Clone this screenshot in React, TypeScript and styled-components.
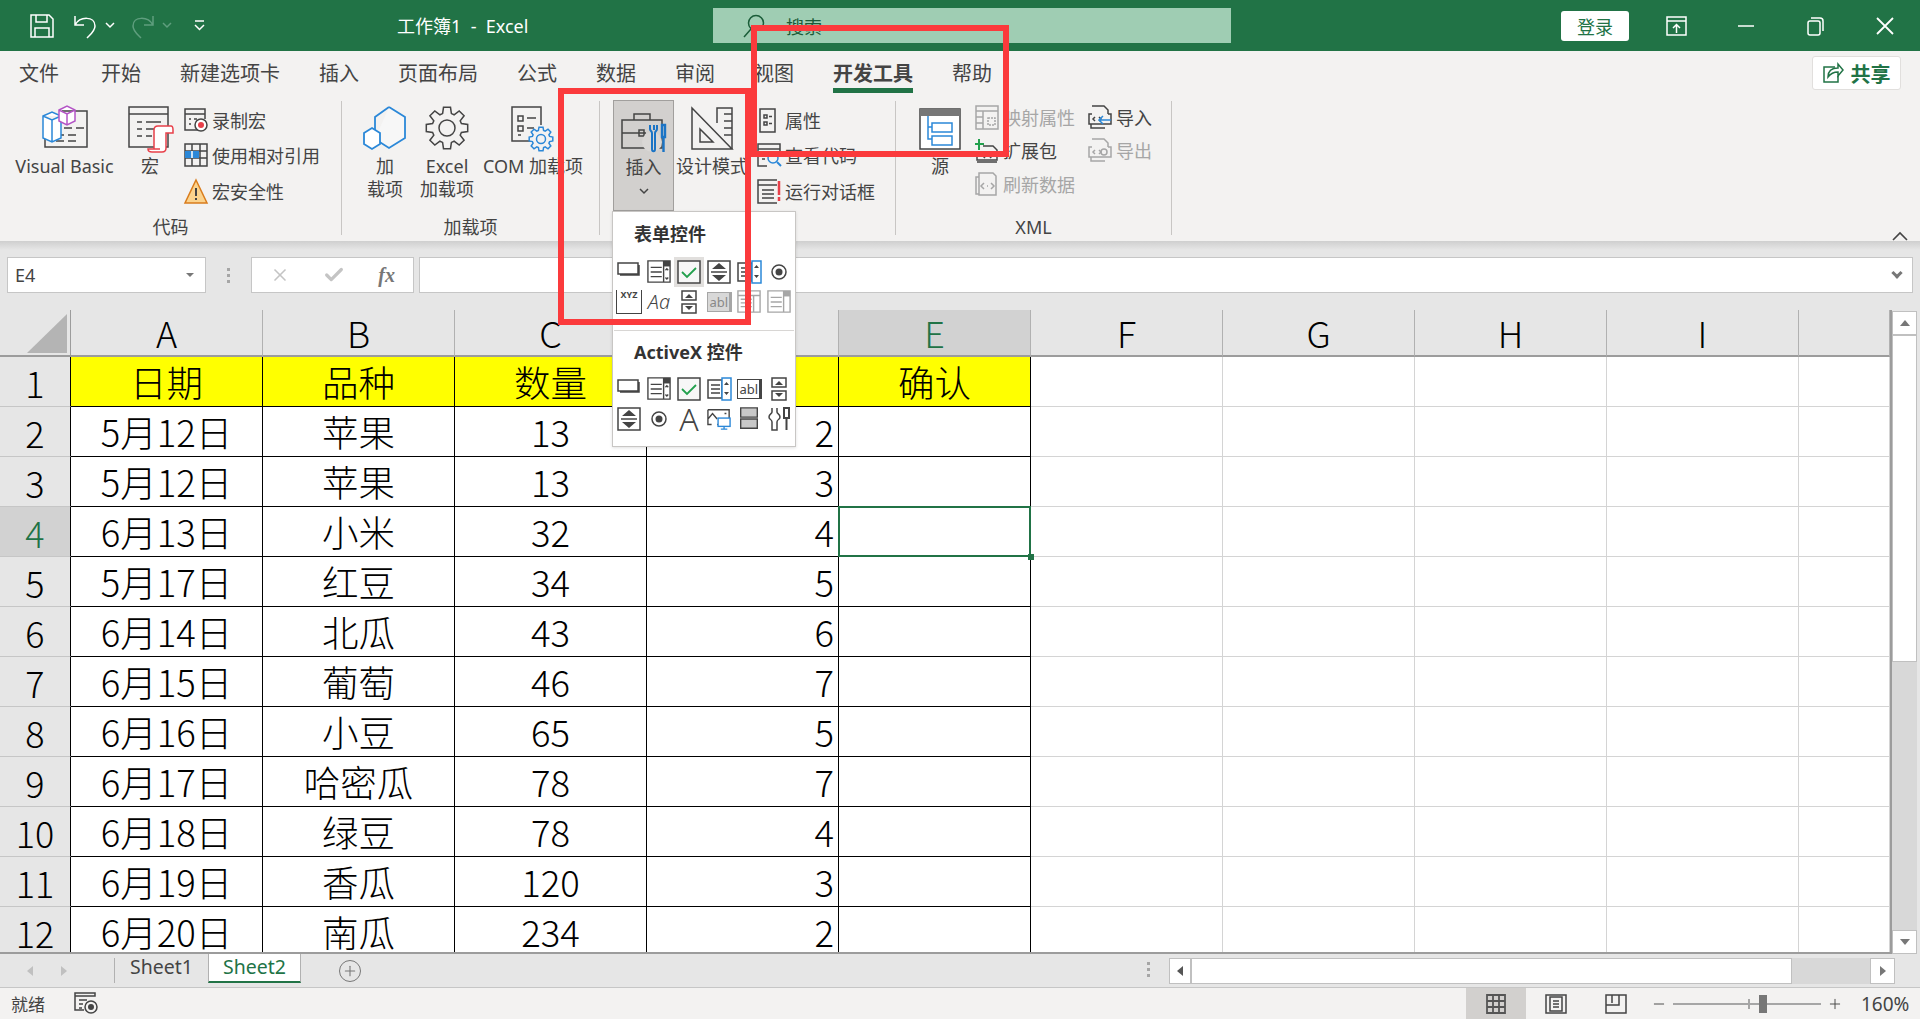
import React from 'react';
import styled, { createGlobalStyle } from 'styled-components';
import { X, Check, Plus, Minus } from 'lucide-react';

const UI_FONT = '"Noto Sans", "Noto Sans CJK SC", sans-serif';
const CELL_FONT = '"Noto Sans CJK SC", sans-serif';
const GREEN = '#217346';
const TEXT = '#444';
const MUTED = '#a6a6a6';

const GlobalStyle = createGlobalStyle`
  html, body {
    margin: 0;
    padding: 0;
    background: #fff;
    font-family: ${UI_FONT};
  }
  * { box-sizing: border-box; }
`;

const Page = styled.div`
  position: relative;
  width: 1920px;
  height: 1019px;
  overflow: hidden;
  display: flex;
  flex-direction: column;
  color: ${TEXT};
`;

/* ---------- drawings ---------- */

const Svg = styled.svg`
  display: block;
  flex: none;
  fill: none;
  stroke: ${TEXT};
  stroke-width: 1.5;
  overflow: visible;
`;

const gear = (cx: number, cy: number, ro: number, ri: number, n = 8) => {
  const pts: string[] = [];
  const step = (Math.PI * 2) / n;
  for (let i = 0; i < n; i++) {
    const a = i * step - Math.PI / 2;
    [[-0.3, ri], [-0.17, ro], [0.17, ro], [0.3, ri]].forEach(([k, r]) => {
      const t = a + k * step * 1.25;
      pts.push(`${(cx + Math.cos(t) * r).toFixed(1)} ${(cy + Math.sin(t) * r).toFixed(1)}`);
    });
  }
  return `M${pts.join('L')}Z`;
};

const BLUE = '#2b88d8';
const RED = '#e8404a';

const icons: Record<string, React.ReactNode> = {
  save: <path d="M1 1h18l4 4v18H1zM6 1v7h11V1M5 23v-9h14v9" stroke="#fff" />,
  undo: <path d="M2 3v9h9M2 12C7 3 22 3 22 13c0 5-4 8-8 12" stroke="#fff" />,
  redo: <path d="M22 3v9h-9M22 12C17 3 2 3 2 13c0 5 4 8 8 12" stroke="#5f9e7e" />,
  chevWhite: <path d="M1 1l4 4 4-4" stroke="#fff" />,
  chevDim: <path d="M1 1l4 4 4-4" stroke="#5f9e7e" />,
  chevDark: <path d="M1 1l4 4 4-4" />,
  customize: <path d="M1 1h9M1 5l4.500 4.500L10 5" stroke="#fff" />,
  search: <><circle cx="14" cy="9" r="7.500" stroke="#1a5c38" /><path d="M9 15L2 23" stroke="#1a5c38" /></>,
  present: <><rect x="1" y="1" width="19" height="18" stroke="#fff" /><path d="M1 5h19M10.500 17V9M7 12l3.500-3.500L14 12" stroke="#fff" /></>,
  minimize: <path d="M0 1h16" stroke="#fff" />,
  restore: <path d="M1 7a2 2 0 0 1 2-2h8a2 2 0 0 1 2 2v10a2 2 0 0 1-2 2H3a2 2 0 0 1-2-2zM4 2h9a3 3 0 0 1 3 3v10" stroke="#fff" />,
  close: <path d="M1 1l16 16M17 1L1 17" stroke="#fff" strokeWidth="1.8" />,
  share: <><path d="M12 4H1v15h14v-6" stroke={GREEN} /><path d="M5 14c0-6 4-9 10-9V1l5 6-5 6V9c-4 0-7 1-10 5z" stroke={GREEN} fill="#fff" /></>,
  vb: <g transform="translate(0 -2)">
    <path d="M20 7h25v36H3V30M22 24h8M34 24h8M14 31h8M26 31h8M14 37h8M26 37h8" />
    <path d="M1 12l9-4 9 4v22l-9 4-9-4zM1 12l9 4 9-4M10 16v22" stroke={BLUE} fill="#fff" />
    <path d="M17 6l8-4 8 4v11l-8 4-8-4zM17 6l8 4 8-4M25 10v11" stroke="#b455c6" fill="#fff" />
  </g>,
  macro: <g transform="translate(1 2)">
    <path d="M1 1h39v40H1zM1 8h39M9 16h5M18 16h15M9 23h5M18 23h12M9 30h5M18 30h6" />
    <path d="M26 43V24c0-3 2-4 4-4h13c2 0 2 2 2 4v3h-7v15c0 3-2 4-4 4H24c-3 0-4-1-4-3h12" stroke={RED} fill="#fff" />
  </g>,
  record: <>
    <path d="M17 22H1V1h20v10M1 6h20M5 11h2M5 16h2M10 11h3" />
    <circle cx="17" cy="17" r="6" fill="#fff" /><circle cx="17" cy="17" r="3" fill={RED} stroke="none" />
  </>,
  relative: <>
    <path d="M1 1h22v22H1zM1 8h22M1 15h22M8 1v22M16 1v22" />
    <rect x="1" y="8" width="14" height="7" fill={BLUE} stroke="none" />
    <path d="M8 8v7" stroke="#fff" />
  </>,
  warning: <>
    <path d="M12 1l11 23H1z" fill="#fbd38d" stroke="#d97c1c" />
    <path d="M12 9v8M12 19v2" stroke={TEXT} strokeWidth="2" />
  </>,
  addin: <>
    <path d="M26 1l16 10v21L26 42 12 33" stroke={BLUE} strokeWidth="1.800" fill="#f7f7f7" />
    <path d="M12 33V11L26 1" stroke={BLUE} strokeWidth="1.800" />
    <path d="M9 27l8 5v11l-8 5-8-5V32z" stroke={BLUE} strokeWidth="1.800" fill="#fff" transform="translate(0 -5)" />
  </>,
  excelAddin: <><path d={gear(22, 22, 21, 15)} /><circle cx="22" cy="22" r="8" /></>,
  comAddin: <>
    <path d="M30 35H1V1h29v18M7 10h5v5H7zM16 12h9M7 20h5v5H7zM16 22h7M7 29h3" />
    <path d={gear(30, 33, 12, 9)} stroke={BLUE} fill="#f3f2f1" /><circle cx="30" cy="33" r="4.500" stroke={BLUE} />
  </>,
  toolbox: <>
    <path d="M1 7h40v28H1zM1 20h24M13 7V1h16v6M18 17h5v6h-5z" />
    <circle cx="31" cy="29" r="10" fill="#d9d7d5" stroke="none" />
    <path d="M29 12v4c0 2 2 2 2 4v16c0 3 3 3 3 0V20c0-2 2-2 2-4v-4M33 12v5" stroke="#1b74c5" strokeWidth="2" />
    <path d="M41 12h3v12h-3zM42.500 24v15" stroke="#1b74c5" strokeWidth="2.400" />
  </>,
  design: <>
    <path d="M1 1l40 41H1zM9 22l13 13H9z" />
    <path d="M26 16V1h15v41M33 7h8M33 14h8M33 21h8M33 28h8" />
  </>,
  properties: <path d="M3 1h15v23H3zM7 7h3v3H7zM12 8.500h3M7 14h3v3H7zM12 15.500h3" />,
  viewCode: <>
    <path d="M23 10V1H1v22h9M1 6h22M5 11h5M5 16h3" />
    <circle cx="16" cy="15" r="5" stroke={BLUE} fill="#f3f2f1" /><path d="M20 19l4 4" stroke={BLUE} strokeWidth="2" />
  </>,
  dialog: <>
    <path d="M20 1H1v23h19M1 6h19M5 11h12M5 15h12M5 19h12" />
    <path d="M22 2v14M22 18v4" stroke={RED} strokeWidth="2.500" />
  </>,
  source: <>
    <rect x="1" y="1" width="40" height="40" fill="#fff" /><rect x="1" y="1" width="40" height="7" fill="#777" stroke="none" />
    <path d="M9 8v23h4M9 19h4" stroke={BLUE} />
    <path d="M13 15h20v9H13zM13 28h20v9H13z" stroke={BLUE} fill="#fff" />
  </>,
  mapProps: <>
    <path d="M1 1h22v23H1zM1 6h22M8 6v18M1 12h7M1 18h7" stroke={MUTED} />
    <path d="M13 13h7v7h-7z" stroke={MUTED} strokeDasharray="2 1" />
  </>,
  expansion: <>
    <path d="M8 8h10l4 4v10H2v-4M2 24h20" />
    <path d="M4 1v11M0 6h9" stroke="#22a04d" strokeWidth="2" />
    <path d="M10 16l-2 2 2 2M15 16l2 2-2 2" />
  </>,
  refresh: <>
    <path d="M4 1h14l3 3v19H4zM4 5H1v17h3" stroke={MUTED} />
    <path d="M9 11l-3 3 3 3M16 11l3 3-3 3M12 14h1" stroke={MUTED} />
  </>,
  importFile: <>
    <path d="M4 1h12l4 4v4M3 19v4h14" />
    <path d="M4 9H1v10h22V9H20" />
    <path d="M7 12l-2 2 2 2M11 12l2 2-2 2" />
    <path d="M23 15H11M15 11l-4 4 4 4" stroke={BLUE} fill="none" />
  </>,
  exportFile: <>
    <path d="M4 1h12l4 4v4M3 19v4h14" stroke={MUTED} />
    <path d="M4 9H1v10h22V9H20" stroke={MUTED} />
    <path d="M7 12l-2 2 2 2M11 12l2 2-2 2" stroke={MUTED} />
    <circle cx="16" cy="14" r="3" stroke={MUTED} />
  </>,
  ribbonCollapse: <path d="M1 10l7-7 7 7" strokeWidth="1.600" />,
  button: <path d="M1 3h20v11H1z M22 5v10H3" />,
  combo: <><path d="M1 1h24v23H1zM4 8h12M4 13h12M4 18h12M18 1v23" /><rect x="18" y="1" width="7" height="6" fill={TEXT} stroke="none" /><path d="M20 11l1.500-1.500L23 11M20 19l1.500 1.500L23 19" /></>,
  check: <><rect x="1" y="1" width="22" height="22" fill="#f7f7f7" /><path d="M5 12l5 5 9-9" stroke="#22a04d" strokeWidth="1.800" /></>,
  spin: <><rect x="1" y="1" width="22" height="22" /><path d="M5 9l7-6 7 6zM5 15l7 6 7-6z" fill={TEXT} stroke="none" /><path d="M4 12h16" /></>,
  listSpin: <><path d="M1 3h14v18H1zM4 8h9M4 12h9M4 16h9" /><rect x="15" y="1" width="9" height="22" stroke={BLUE} fill="#fff" /><path d="M17 8l2.500-3L22 8zM17 15l2.500 3L22 15z" fill={TEXT} stroke="none" /></>,
  radio: <><circle cx="12" cy="12" r="7" /><circle cx="12" cy="12" r="3.500" fill={TEXT} stroke="none" /></>,
  spinTall: <><path d="M5 1h14v9H5zM5 14h14v9H5z" /><path d="M8 8l4-4 4 4zM8 16l4 4 4-4z" fill={TEXT} stroke="none" /></>,
  comboOff: <><path d="M1 1h24v23H1zM1 6h24M4 10h12M4 14h12M4 18h12M18 6v18" stroke={MUTED} /></>,
  listOff: <><path d="M1 1h24v23H1zM4 8h12M4 13h12M4 18h12M18 1v23" stroke={MUTED} /><rect x="18" y="1" width="7" height="6" fill={MUTED} stroke="none" /></>,
  picture: <><path d="M1 3h23v16H11" /><path d="M1 3v16h4M1 13l5-6 5 6M19 7h2" /><rect x="12" y="12" width="13" height="9" stroke={BLUE} fill="#fff" /><path d="M18.500 21v3M15 24h7" stroke={BLUE} /></>,
  toggle: <><path d="M4 1h18v10H4z" fill="#c8c8c8" /><path d="M4 13h18v10H4z" fill="#c8c8c8" /></>,
  tools: <><path d="M5 1v4c0 2-3 2-3 5s3 2 3 5v8h5v-8c0-3 3-2 3-5s-3-3-3-5V1" /><path d="M17 1h5v10h-5zM19.500 11v12" strokeWidth="2" /></>,
  nameArrow: <path d="M0 0h8L4 4z" fill="#777" stroke="none" />,
  grid: <path d="M1 1h18v18H1zM7 1v18M13 1v18M1 7h18M1 13h18" stroke="#555" strokeWidth="1.800" />,
  pageLayout: <><rect x="1" y="1" width="20" height="18" /><path d="M5 3h12v14H5zM8 7h6M8 10h6M8 13h6" /></>,
  pageBreak: <path d="M1 1h20v18H1zM1 11h13V1M7 1v8" />,
  macroStatus: <><path d="M1 1h20v3H1zM1 4v14h9M5 8h8M5 12h4M5 16h3" /><circle cx="17" cy="15" r="6" /><circle cx="17" cy="15" r="3" fill={TEXT} stroke="none" /></>,
};

const Icon = ({ name, w = 24, h = 24 }: { name: string; w?: number; h?: number }) => (
  <Svg width={w} height={h} viewBox={`0 0 ${w} ${h}`}>{icons[name]}</Svg>
);

const FittedIcon = ({ name, box = 24, size = 24 }: { name: string; box?: number; size?: number }) => (
  <Svg width={size} height={size} viewBox={`0 0 ${box} ${box}`}>{icons[name]}</Svg>
);

/* ---------- title bar ---------- */

const TitleBar = styled.header`
  height: 51px;
  flex: none;
  display: flex;
  align-items: center;
  background: ${GREEN};
  color: #fff;
`;

const QuickAccess = styled.div`
  width: 397px;
  padding-left: 30px;
  display: flex;
  align-items: center;
`;

const QuickSlot = styled.span<{ $gap: number }>`
  display: block;
  margin-right: ${(p) => p.$gap}px;
`;

const Title = styled.div`
  width: 316px;
  margin-top: -2px;
  font-size: 18px;
  white-space: pre;
`;

const SearchBox = styled.div`
  width: 518px;
  height: 35px;
  padding-left: 29px;
  display: flex;
  align-items: center;
  gap: 20px;
  background: #9fcdb3;
  color: #1a5c38;
  font-size: 18px;
`;

const SignIn = styled.button`
  width: 68px;
  height: 30px;
  margin-left: auto;
  margin-right: 13px;
  padding: 0;
  border: 0;
  border-radius: 3px;
  background: #fff;
  color: ${GREEN};
  font: 18px ${UI_FONT};
`;

const WinButton = styled.div`
  width: 69.500px;
  height: 51px;
  display: flex;
  align-items: center;
  justify-content: center;
`;

/* ---------- tabs ---------- */

const TabRow = styled.nav`
  height: 44px;
  flex: none;
  padding-left: 19px;
  display: flex;
  gap: 39px;
  background: #f3f2f1;
`;

const Tab = styled.div<{ $active?: boolean }>`
  height: 42px;
  padding-top: 8px;
  font-size: 20px;
  line-height: 30px;
  font-weight: ${(p) => (p.$active ? 700 : 400)};
  border-bottom: ${(p) => (p.$active ? `5px solid ${GREEN}` : '0')};
  &:first-child { margin-right: 3px; }
`;

const ShareButton = styled.div`
  width: 89px;
  height: 34px;
  margin: 5px 19px 0 auto;
  display: flex;
  align-items: center;
  justify-content: center;
  gap: 7px;
  background: #fff;
  border: 1px solid #e1dfdd;
  border-radius: 3px;
  color: ${GREEN};
  font-size: 20px;
  font-weight: 700;
`;

/* ---------- ribbon ---------- */

const Ribbon = styled.section`
  height: 146px;
  flex: none;
  padding-top: 6px;
  display: flex;
  background: #f3f2f1;
`;

const Group = styled.div<{ $width: number }>`
  width: ${(p) => p.$width}px;
  height: 134px;
  flex: none;
  display: flex;
  flex-direction: column;
  border-right: 1px solid #c8c6c4;
`;

const GroupBody = styled.div`
  height: 112px;
  display: flex;
`;

const GroupLabel = styled.div`
  margin-top: auto;
  height: 22px;
  position: relative;
  top: 3px;
  text-align: center;
  font-size: 18px;
  line-height: 22px;
`;

const BigButton = styled.div<{ $width: number; $left?: number; $pressed?: boolean }>`
  width: ${(p) => p.$width}px;
  flex: none;
  margin-left: ${(p) => p.$left || 0}px;
  height: ${(p) => (p.$pressed ? '111px' : 'auto')};
  margin-top: ${(p) => (p.$pressed ? '-1px' : '0')};
  padding-top: ${(p) => (p.$pressed ? '12px' : '5px')};
  display: flex;
  flex-direction: column;
  align-items: center;
  text-align: center;
  background: ${(p) => (p.$pressed ? '#d2d0ce' : 'transparent')};
  border: ${(p) => (p.$pressed ? '1px solid #a19f9d' : '0')};
  font-size: 18px;
  line-height: 23px;
  white-space: nowrap;
`;

const PressedLabel = styled.span`
  margin: 3px 0 9px;
`;

const BigIconSlot = styled.div`
  height: 44px;
  margin-bottom: 5px;
  display: flex;
  align-items: flex-end;
`;

const SmallColumn = styled.div<{ $left: number; $rowHeight: number; $top?: number; $width?: number }>`
  flex: none;
  width: ${(p) => (p.$width ? `${p.$width}px` : 'auto')};
  margin-left: ${(p) => p.$left}px;
  margin-top: ${(p) => p.$top || 0}px;
  display: grid;
  grid-auto-rows: ${(p) => p.$rowHeight}px;
`;

const SmallButton = styled.div<{ $disabled?: boolean }>`
  display: flex;
  align-items: center;
  gap: 4px;
  font-size: 18px;
  white-space: nowrap;
  color: ${(p) => (p.$disabled ? MUTED : TEXT)};
`;

const CollapseButton = styled.div`
  align-self: flex-end;
  margin: 0 12px 0 auto;
`;

/* ---------- insert menu ---------- */

const InsertMenu = styled.div`
  position: absolute;
  left: 612px;
  top: 211px;
  width: 184px;
  height: 236px;
  z-index: 2;
  padding: 0 1px;
  background: #fff;
  border: 1px solid #c8c6c4;
  box-shadow: 0 1px 3px rgba(0, 0, 0, 0.12);
`;

const MenuTitle = styled.div<{ $height: number }>`
  height: ${(p) => p.$height}px;
  padding: 0 0 3px 20px;
  display: flex;
  align-items: center;
  font-size: 18px;
  font-weight: 700;
  color: #333;
`;

const MenuGrid = styled.div`
  display: grid;
  grid-template-columns: repeat(6, 30px);
  grid-auto-rows: 30px;
`;

const MenuItem = styled.div<{ $hover?: boolean }>`
  display: flex;
  align-items: center;
  justify-content: center;
  background: ${(p) => (p.$hover ? '#e1dfdd' : 'transparent')};
`;

const MenuDivider = styled.div`
  height: 1px;
  margin: 13px 0 0;
  background: #d8d6d4;
`;

const GroupBoxLabel = styled.span`
  display: block;
  width: 26px;
  height: 24px;
  font-size: 9px;
  font-weight: 700;
  line-height: 9px;
  text-align: center;
  border: 1.500px solid ${TEXT};
  border-top-width: 0;
`;

const LabelGlyph = styled.span<{ $size: number; $italic?: boolean }>`
  font-size: ${(p) => p.$size}px;
  font-style: ${(p) => (p.$italic ? 'italic' : 'normal')};
  font-weight: 300;
  line-height: 1;
`;

const TextBoxGlyph = styled.span<{ $off?: boolean }>`
  width: 25px;
  height: 20px;
  display: flex;
  align-items: center;
  padding-left: 2px;
  font-size: 13px;
  line-height: 1;
  border: 1.500px solid ${(p) => (p.$off ? MUTED : TEXT)};
  border-right-width: 3px;
  background: ${(p) => (p.$off ? '#d8d8d8' : '#fff')};
  color: ${(p) => (p.$off ? '#888' : TEXT)};
`;

/* ---------- red annotations ---------- */

const InsertMark = styled.div`
  position: absolute;
  left: 558px;
  top: 88px;
  width: 193px;
  height: 237px;
  z-index: 3;
  border: 6px solid #fb3a3c;
`;

const TabsMark = styled.div`
  position: absolute;
  left: 751px;
  top: 25px;
  width: 258px;
  height: 132px;
  z-index: 3;
  border: 6px solid #fb3a3c;
`;

/* ---------- formula bar ---------- */

const FormulaBand = styled.div`
  height: 69px;
  flex: none;
  padding: 16px 7px 0;
  display: flex;
  align-items: flex-start;
  background: linear-gradient(#cfcfcf, #e6e6e6 9px);
`;

const NameBox = styled.div`
  width: 199px;
  height: 36px;
  padding: 0 11px 0 7px;
  display: flex;
  align-items: center;
  justify-content: space-between;
  background: #fff;
  border: 1px solid #c6c6c6;
  font-size: 18px;
`;

const Grip = styled.div<{ $width: number }>`
  width: ${(p) => p.$width}px;
  height: 36px;
  display: flex;
  flex-direction: column;
  align-items: center;
  justify-content: center;
  gap: 3px;
  flex: none;
`;

const GripDot = styled.span`
  width: 3px;
  height: 3px;
  background: #a6a6a6;
`;

const FxBox = styled.div`
  width: 163px;
  height: 36px;
  padding: 0 18px 0 18px;
  display: flex;
  align-items: center;
  justify-content: space-between;
  background: #fff;
  border: 1px solid #c6c6c6;
`;

const FxLabel = styled.span`
  font: italic 700 20px "Liberation Serif", serif;
  color: #777;
`;

const FormulaInput = styled.div`
  flex: 1;
  height: 36px;
  margin-left: 5px;
  padding-right: 8px;
  display: flex;
  align-items: center;
  justify-content: flex-end;
  background: #fff;
  border: 1px solid #c6c6c6;
`;

const HeavyChevron = styled.span`
  width: 8px;
  height: 8px;
  margin-top: -5px;
  margin-right: 3px;
  transform: rotate(45deg);
  border-right: 3px solid #777;
  border-bottom: 3px solid #777;
`;

/* ---------- sheet ---------- */

const SheetArea = styled.div`
  height: 644px;
  flex: none;
  display: flex;
  background: #e6e6e6;
`;

const Grid = styled.div`
  width: 1892px;
  height: 644px;
  overflow: hidden;
  display: grid;
  grid-template-columns: 71px repeat(9, 192px) 91px;
  grid-template-rows: 47px repeat(12, 50px);
  background: #fff;
  border-right: 2px solid #9c9c9c;
  border-bottom: 2px solid #9c9c9c;
`;

const CornerCell = styled.div`
  padding: 4px 0 0 27px;
  background: #e6e6e6;
  border-right: 1px solid #9c9c9c;
  border-bottom: 2px solid #9c9c9c;
`;

const CornerTriangle = styled.div`
  width: 40px;
  height: 39px;
  background: #b4b4b4;
  clip-path: polygon(100% 0, 100% 100%, 0 100%);
`;

const ColumnHead = styled.div<{ $selected?: boolean }>`
  display: flex;
  justify-content: center;
  background: ${(p) => (p.$selected ? '#d2d2d2' : '#e6e6e6')};
  color: ${(p) => (p.$selected ? GREEN : '#000')};
  border-right: 1px solid #b1b1b1;
  border-bottom: 2px solid #9c9c9c;
  font: 300 36px/44px ${CELL_FONT};
`;

const RowHead = styled.div<{ $selected?: boolean }>`
  display: flex;
  justify-content: center;
  background: ${(p) => (p.$selected ? '#d2d2d2' : '#e6e6e6')};
  color: ${(p) => (p.$selected ? GREEN : '#000')};
  border-right: 1px solid #000;
  border-bottom: 1px solid #c6c6c6;
  font: 300 36px/50px ${CELL_FONT};
`;

const Cell = styled.div<{ $align?: string; $bordered?: boolean; $fill?: boolean; $selected?: boolean }>`
  position: relative;
  z-index: ${(p) => (p.$selected ? 1 : 'auto')};
  padding: 0 4px;
  text-align: ${(p) => p.$align || 'center'};
  background: ${(p) => (p.$fill ? '#ffff00' : '#fff')};
  color: #000;
  border-right: 1px solid ${(p) => (p.$bordered ? '#000' : '#d4d4d4')};
  border-bottom: 1px solid ${(p) => (p.$bordered ? '#000' : '#d4d4d4')};
  font: 300 36.500px/50px ${CELL_FONT};
  white-space: nowrap;
`;

const SelectionFrame = styled.span`
  position: absolute;
  inset: -1px -1px -1px -1px;
  border: 2px solid ${GREEN};
`;

const FillHandle = styled.span`
  position: absolute;
  right: -4px;
  bottom: -4px;
  width: 6px;
  height: 6px;
  background: ${GREEN};
`;

const VScroll = styled.div`
  width: 28px;
  padding: 1px 3px 0 0;
  display: flex;
  flex-direction: column;
`;

const ScrollButton = styled.div<{ $w?: number; $h?: number }>`
  width: ${(p) => (p.$w ? `${p.$w}px` : 'auto')};
  height: ${(p) => (p.$h ? `${p.$h}px` : 'auto')};
  flex: none;
  display: flex;
  align-items: center;
  justify-content: center;
  background: #fff;
  border: 1px solid #c0c0c0;
`;

const Triangle = styled.span<{ $dir: 'up' | 'down' | 'left' | 'right'; $color?: string }>`
  width: 0;
  height: 0;
  border-style: solid;
  border-color: transparent;
  ${(p) => {
    const c = p.$color || '#777';
    if (p.$dir === 'up') return `border-width: 0 5.5px 6px; border-bottom-color: ${c};`;
    if (p.$dir === 'down') return `border-width: 6px 5.5px 0; border-top-color: ${c};`;
    if (p.$dir === 'left') return `border-width: 5.5px 6px 5.5px 0; border-right-color: ${c};`;
    return `border-width: 5.5px 0 5.5px 6px; border-left-color: ${c};`;
  }}
`;

const VThumb = styled.div`
  height: 327px;
  flex: none;
  background: #fff;
  border: 1px solid #c0c0c0;
`;

const VTrack = styled.div`
  flex: 1;
  background: #d8d8d8;
`;

/* ---------- sheet tabs ---------- */

const SheetBar = styled.div`
  height: 34px;
  flex: none;
  display: flex;
  align-items: flex-start;
  background: #e6e6e6;
  border-bottom: 1px solid #c6c6c6;
`;

const SheetNav = styled.div`
  width: 115px;
  height: 25px;
  margin-top: 4px;
  padding-left: 27px;
  display: flex;
  align-items: center;
  gap: 28px;
  border-right: 1px solid #b1b1b1;
`;

const SheetTab = styled.div<{ $active?: boolean }>`
  width: 93px;
  height: 29px;
  text-align: center;
  font-size: 19.500px;
  line-height: 26px;
  color: ${(p) => (p.$active ? GREEN : TEXT)};
  background: ${(p) => (p.$active ? '#fff' : 'transparent')};
  border-bottom: ${(p) => (p.$active ? `2px solid ${GREEN}` : '0')};
  border-left: ${(p) => (p.$active ? '1px solid #b1b1b1' : '0')};
  border-right: ${(p) => (p.$active ? '1px solid #b1b1b1' : '0')};
`;

const AddSheet = styled.div`
  width: 22px;
  height: 22px;
  margin: 6px 0 0 38px;
  display: flex;
  align-items: center;
  justify-content: center;
  border: 1px solid #777;
  border-radius: 50%;
  color: #777;
`;

const HGrip = styled(Grip)`
  margin-left: 776px;
  height: 30px;
`;

const HScroll = styled.div`
  width: 726px;
  height: 26px;
  margin: 4px 0 0 10px;
  display: flex;
  background: #d8d8d8;
`;

const HThumb = styled.div`
  width: 601px;
  flex: none;
  background: #fff;
  border: 1px solid #c0c0c0;
`;

const HTrackEnd = styled(ScrollButton)`
  margin-left: auto;
`;

/* ---------- status bar ---------- */

const StatusBar = styled.footer`
  flex: 1;
  display: flex;
  align-items: center;
  background: #f3f2f1;
  font-size: 17px;
`;

const StatusText = styled.span`
  margin-left: 11px;
  width: 63px;
`;

const ViewButton = styled.div<{ $active?: boolean; $first?: boolean }>`
  width: 60px;
  height: 31px;
  margin-left: ${(p) => (p.$first ? 'auto' : '0')};
  display: flex;
  align-items: center;
  justify-content: center;
  background: ${(p) => (p.$active ? '#d2d0ce' : 'transparent')};
`;

const ZoomSpacer = styled.span`
  width: 5px;
`;

const ZoomSlider = styled.div`
  position: relative;
  width: 148px;
  height: 2px;
  margin: 0 6px;
  background: #a6a6a6;
`;

const ZoomTick = styled.span`
  position: absolute;
  left: 75px;
  top: -4px;
  width: 2px;
  height: 10px;
  background: #a6a6a6;
`;

const ZoomThumb = styled.span`
  position: absolute;
  left: 86px;
  top: -8px;
  width: 8px;
  height: 18px;
  background: #777;
`;

const ZoomValue = styled.span`
  margin: 0 10px 0 18px;
  width: 49px;
  font-size: 19px;
  white-space: nowrap;
`;

/* ---------- data ---------- */

const COLUMNS = ['A', 'B', 'C', 'D', 'E', 'F', 'G', 'H', 'I', ''];
const HEADINGS = ['日期', '品种', '数量'];
const ROWS: [string, string, string, string][] = [
  ['5月12日', '苹果', '13', '2'],
  ['5月12日', '苹果', '13', '3'],
  ['6月13日', '小米', '32', '4'],
  ['5月17日', '红豆', '34', '5'],
  ['6月14日', '北瓜', '43', '6'],
  ['6月15日', '葡萄', '46', '7'],
  ['6月16日', '小豆', '65', '5'],
  ['6月17日', '哈密瓜', '78', '7'],
  ['6月18日', '绿豆', '78', '4'],
  ['6月19日', '香瓜', '120', '3'],
  ['6月20日', '南瓜', '234', '2'],
];
const TABS = ['文件', '开始', '新建选项卡', '插入', '页面布局', '公式', '数据', '审阅', '视图', '开发工具', '帮助'];
const FORM_ICONS = ['button', 'combo', 'check', 'spin', 'listSpin', 'radio'];
const ACTIVEX_TOP = ['button', 'combo', 'check', 'listSpin', 'textBox', 'spinTall'];

const Big = ({ icon, w, h, label, second, width, left }: {
  icon: string; w: number; h: number; label: string; second?: string; width: number; left?: number;
}) => (
  <BigButton $width={width} $left={left}>
    <BigIconSlot><Icon name={icon} w={w} h={h} /></BigIconSlot>
    <span>{label}</span>
    {second && <span>{second}</span>}
  </BigButton>
);

const Small = ({ icon, label, disabled }: { icon: string; label: string; disabled?: boolean }) => (
  <SmallButton $disabled={disabled}>
    <Icon name={icon} />
    <span>{label}</span>
  </SmallButton>
);

const App = () => {
  return (
    <Page>
      <GlobalStyle />
      <TitleBar>
        <QuickAccess>
          <QuickSlot $gap={19}><Icon name="save" /></QuickSlot>
          <QuickSlot $gap={8}><Icon name="undo" h={26} /></QuickSlot>
          <QuickSlot $gap={16}><Icon name="chevWhite" w={10} h={7} /></QuickSlot>
          <QuickSlot $gap={7}><Icon name="redo" h={26} /></QuickSlot>
          <QuickSlot $gap={22}><Icon name="chevDim" w={10} h={7} /></QuickSlot>
          <QuickSlot $gap={0}><Icon name="customize" w={11} h={11} /></QuickSlot>
        </QuickAccess>
        <Title>工作簿1  -  Excel</Title>
        <SearchBox>
          <Icon name="search" />
          <span>搜索</span>
        </SearchBox>
        <SignIn>登录</SignIn>
        <WinButton><Icon name="present" w={21} h={20} /></WinButton>
        <WinButton><Icon name="minimize" w={16} h={2} /></WinButton>
        <WinButton><Icon name="restore" w={17} h={20} /></WinButton>
        <WinButton><Icon name="close" w={18} h={18} /></WinButton>
      </TitleBar>

      <TabRow>
        {TABS.map((t) => (
          <Tab key={t} $active={t === '开发工具'}>{t}</Tab>
        ))}
        <ShareButton>
          <Icon name="share" w={21} h={20} />
          <span>共享</span>
        </ShareButton>
      </TabRow>

      <Ribbon>
        <Group $width={342}>
          <GroupBody>
            <Big icon="vb" w={46} h={44} label="Visual Basic" width={129} />
            <Big icon="macro" w={46} h={46} label="宏" width={42} />
            <SmallColumn $left={13} $rowHeight={35.5} $top={1}>
              <Small icon="record" label="录制宏" />
              <Small icon="relative" label="使用相对引用" />
              <Small icon="warning" label="宏安全性" />
            </SmallColumn>
          </GroupBody>
          <GroupLabel>代码</GroupLabel>
        </Group>
        <Group $width={258}>
          <GroupBody>
            <Big icon="addin" w={44} h={44} label="加" second="载项" width={60} left={13} />
            <Big icon="excelAddin" w={44} h={44} label="Excel" second="加载项" width={64} />
            <Big icon="comAddin" w={44} h={44} label="COM 加载项" width={104} left={2} />
          </GroupBody>
          <GroupLabel>加载项</GroupLabel>
        </Group>
        <Group $width={296}>
          <GroupBody>
            <BigButton $width={61} $left={13} $pressed>
              <Icon name="toolbox" w={46} h={40} />
              <PressedLabel>插入</PressedLabel>
              <Icon name="chevDark" w={10} h={7} />
            </BigButton>
            <Big icon="design" w={42} h={43} label="设计模式" width={70} left={3} />
            <SmallColumn $left={10} $rowHeight={35.5} $top={1}>
              <Small icon="properties" label="属性" />
              <Small icon="viewCode" label="查看代码" />
              <Small icon="dialog" label="运行对话框" />
            </SmallColumn>
          </GroupBody>
        </Group>
        <Group $width={276}>
          <GroupBody>
            <Big icon="source" w={42} h={42} label="源" width={60} left={14} />
            <SmallColumn $left={5} $rowHeight={33.5} $width={113} $top={-1}>
              <Small icon="mapProps" label="映射属性" disabled />
              <Small icon="expansion" label="扩展包" />
              <Small icon="refresh" label="刷新数据" disabled />
            </SmallColumn>
            <SmallColumn $left={0} $rowHeight={33.5} $top={-1}>
              <Small icon="importFile" label="导入" />
              <Small icon="exportFile" label="导出" disabled />
            </SmallColumn>
          </GroupBody>
          <GroupLabel>XML</GroupLabel>
        </Group>
        <CollapseButton><Icon name="ribbonCollapse" w={16} h={11} /></CollapseButton>
      </Ribbon>

      <InsertMenu>
        <MenuTitle $height={45}>表单控件</MenuTitle>
        <MenuGrid>
          {FORM_ICONS.map((n) => (
            <MenuItem key={n} $hover={n === 'check'}><FittedIcon name={n} box={n === 'combo' ? 26 : 24} /></MenuItem>
          ))}
          <MenuItem><GroupBoxLabel>XYZ</GroupBoxLabel></MenuItem>
          <MenuItem><LabelGlyph $size={20} $italic>Aa</LabelGlyph></MenuItem>
          <MenuItem><FittedIcon name="spinTall" /></MenuItem>
          <MenuItem><TextBoxGlyph $off>abl</TextBoxGlyph></MenuItem>
          <MenuItem><FittedIcon name="comboOff" box={26} /></MenuItem>
          <MenuItem><FittedIcon name="listOff" box={26} /></MenuItem>
        </MenuGrid>
        <MenuDivider />
        <MenuTitle $height={43}>ActiveX 控件</MenuTitle>
        <MenuGrid>
          {ACTIVEX_TOP.map((n, i) => (
            <MenuItem key={i}>
              {n === 'textBox' ? <TextBoxGlyph>abl</TextBoxGlyph> : <FittedIcon name={n} box={n === 'combo' ? 26 : 24} />}
            </MenuItem>
          ))}
          <MenuItem><FittedIcon name="spin" /></MenuItem>
          <MenuItem><FittedIcon name="radio" /></MenuItem>
          <MenuItem><LabelGlyph $size={32}>A</LabelGlyph></MenuItem>
          <MenuItem><FittedIcon name="picture" box={26} /></MenuItem>
          <MenuItem><FittedIcon name="toggle" box={26} /></MenuItem>
          <MenuItem><FittedIcon name="tools" /></MenuItem>
        </MenuGrid>
      </InsertMenu>
      <InsertMark />
      <TabsMark />

      <FormulaBand>
        <NameBox>
          <span>E4</span>
          <Icon name="nameArrow" w={8} h={4} />
        </NameBox>
        <Grip $width={45}><GripDot /><GripDot /><GripDot /></Grip>
        <FxBox>
          <X size={20} color="#c4c4c4" strokeWidth={2} />
          <Check size={22} color="#c4c4c4" strokeWidth={3.5} />
          <FxLabel>fx</FxLabel>
        </FxBox>
        <FormulaInput><HeavyChevron /></FormulaInput>
      </FormulaBand>

      <SheetArea>
        <Grid>
          <CornerCell><CornerTriangle /></CornerCell>
          {COLUMNS.map((c) => (
            <ColumnHead key={c || 'J'} $selected={c === 'E'}>{c}</ColumnHead>
          ))}
          <RowHead>1</RowHead>
          {HEADINGS.map((h) => <Cell key={h} $fill $bordered>{h}</Cell>)}
          <Cell $fill $bordered />
          <Cell $fill $bordered>确认</Cell>
          {COLUMNS.slice(5).map((c) => <Cell key={c || 'J'} />)}
          {ROWS.map((r, i) => (
            <React.Fragment key={i}>
              <RowHead $selected={i === 2}>{i + 2}</RowHead>
              <Cell $bordered>{r[0]}</Cell>
              <Cell $bordered>{r[1]}</Cell>
              <Cell $bordered>{r[2]}</Cell>
              <Cell $bordered $align="right">{r[3]}</Cell>
              <Cell $bordered $selected={i === 2}>
                {i === 2 && <><SelectionFrame /><FillHandle /></>}
              </Cell>
              {COLUMNS.slice(5).map((c) => <Cell key={c || 'J'} />)}
            </React.Fragment>
          ))}
        </Grid>
        <VScroll>
          <ScrollButton $h={24}><Triangle $dir="up" /></ScrollButton>
          <VThumb />
          <VTrack />
          <ScrollButton $h={24}><Triangle $dir="down" /></ScrollButton>
        </VScroll>
      </SheetArea>

      <SheetBar>
        <SheetNav>
          <Triangle $dir="left" $color="#c0c0c0" />
          <Triangle $dir="right" $color="#c0c0c0" />
        </SheetNav>
        <SheetTab>Sheet1</SheetTab>
        <SheetTab $active>Sheet2</SheetTab>
        <AddSheet><Plus size={16} strokeWidth={1.6} /></AddSheet>
        <HGrip $width={22}><GripDot /><GripDot /><GripDot /></HGrip>
        <HScroll>
          <ScrollButton $w={22}><Triangle $dir="left" $color="#555" /></ScrollButton>
          <HThumb />
          <HTrackEnd $w={25}><Triangle $dir="right" $color="#777" /></HTrackEnd>
        </HScroll>
      </SheetBar>

      <StatusBar>
        <StatusText>就绪</StatusText>
        <FittedIcon name="macroStatus" />
        <ViewButton $first $active><Icon name="grid" w={20} h={20} /></ViewButton>
        <ViewButton><Icon name="pageLayout" w={22} h={20} /></ViewButton>
        <ViewButton><Icon name="pageBreak" w={22} h={20} /></ViewButton>
        <ZoomSpacer />
        <Minus size={16} strokeWidth={1.4} />
        <ZoomSlider><ZoomTick /><ZoomThumb /></ZoomSlider>
        <Plus size={16} strokeWidth={1.4} />
        <ZoomValue>160%</ZoomValue>
      </StatusBar>
    </Page>
  );
};

export default App;
